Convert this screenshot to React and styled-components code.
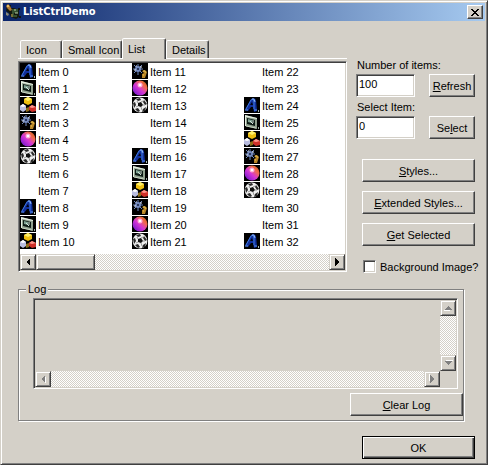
import React from "react";
import styled, { createGlobalStyle } from "styled-components";

const GlobalStyle = createGlobalStyle`
  * {
    box-sizing: border-box;
  }
  body {
    margin: 0;
    background: #d4d0c8;
    color: #000;
    font: 11px/14px "Liberation Sans", Arial, sans-serif;
  }
  button,
  input,
  textarea {
    font: inherit;
    color: inherit;
    border-radius: 0;
    margin: 0;
    outline: none;
  }
`;

const Dialog = styled.main`
  min-height: 100vh;
  padding: 1px;
  border: 1px solid;
  border-color: #d4d0c8 #404040 #404040 #d4d0c8;
  box-shadow: inset 1px 1px #fff, inset -1px -1px #808080;
`;

const TitleBar = styled.header`
  display: flex;
  align-items: center;
  gap: 2px;
  height: 18px;
  margin: 1px;
  padding: 0 2px;
  background: linear-gradient(to right, #0a246a, #a6caf0);
`;

const Title = styled.h1`
  flex: 1;
  margin: 0;
  color: #fff;
  font: bold 11px/14px "DejaVu Sans Condensed", "Noto Sans", sans-serif;
`;

const Raised = styled.button`
  display: flex;
  align-items: center;
  justify-content: center;
  padding: 0;
  background: #d4d0c8;
  border: 1px solid;
  border-color: #fff #404040 #404040 #fff;
  box-shadow: inset -1px -1px #808080;
`;

const CloseButton = styled(Raised)`
  width: 16px;
  height: 14px;
`;

const Button = styled(Raised)`
  width: ${(props) => (props.$small ? "46px" : "113px")};
  height: 23px;
  white-space: nowrap;
`;

const DefaultButton = styled(Button)`
  border-color: #000;
  box-shadow: inset 1px 1px #fff, inset -1px -1px #404040,
    inset -2px -2px #808080;
`;

const Body = styled.div`
  padding: 16px 11px 4px 16px;
`;

const Top = styled.div`
  display: grid;
  grid-template-columns: minmax(0, 1fr) 119px;
  gap: 9px;
`;

const TabList = styled.div`
  display: flex;
  align-items: flex-end;
  height: 20px;
  padding-left: 2px;
`;

const Tab = styled.button`
  height: ${(props) => (props.$active ? "21px" : "18px")};
  margin-bottom: ${(props) => (props.$active ? "-1px" : "0")};
  padding: 0 5px;
  white-space: nowrap;
  background: #d4d0c8;
  border: 1px solid;
  border-color: #fff #404040 transparent #fff;
  border-bottom-width: 0;
  border-radius: 2px 2px 0 0;
  box-shadow: inset -1px 0 #808080;
  width: ${(props) => props.$width};
  text-align: left;
`;

const Pane = styled.div`
  padding-top: 2px;
  border-top: 1px solid #fff;
`;

const Sunken = styled.div`
  padding: 1px;
  border: 1px solid;
  border-color: #808080 #fff #fff #808080;
  box-shadow: inset 1px 1px #404040, inset -1px -1px #d4d0c8;
`;

const ListBox = styled(Sunken)`
  background: #fff;
`;

const Items = styled.ul`
  display: grid;
  grid-auto-flow: column;
  grid-template-rows: repeat(11, 17px);
  grid-auto-columns: 112px;
  margin: 0 0 4px;
  padding: 0;
  list-style: none;
  overflow: hidden;
`;

const Item = styled.li`
  display: flex;
  align-items: center;
  gap: 2px;
`;

const IconSlot = styled.span`
  display: block;
  width: 16px;
  height: 17px;
`;

const ScrollBar = styled.div`
  display: flex;
  flex-direction: ${(props) => (props.$vertical ? "column" : "row")};
  justify-content: space-between;
  background: repeating-conic-gradient(#fff 0 25%, #d4d0c8 0 50%) 0 0 / 2px 2px;
`;

const ScrollButton = styled(Raised)`
  width: 16px;
  height: 16px;
  border-color: #d4d0c8 #404040 #404040 #d4d0c8;
  box-shadow: inset 1px 1px #fff, inset -1px -1px #808080;
`;

const Thumb = styled(ScrollButton)`
  width: 59px;
  margin-right: auto;
`;

const Side = styled.div`
  padding-top: 20px;
`;

const Field = styled.div`
  display: grid;
  grid-template-columns: 59px 46px;
  column-gap: 14px;
  row-gap: 2px;
  margin-bottom: 3px;
`;

const Label = styled.label`
  grid-column: 1 / -1;
  padding-left: 1px;
`;

const TextInput = styled.input`
  width: 100%;
  height: 23px;
  padding: 0 2px 3px;
  background: #fff;
  border: 1px solid;
  border-color: #808080 #fff #fff #808080;
  box-shadow: inset 1px 1px #404040, inset -1px -1px #d4d0c8;
`;

const Actions = styled.div`
  display: flex;
  flex-direction: column;
  gap: 9px;
  padding: 17px 0 0 6px;
`;

const CheckRow = styled.label`
  display: flex;
  align-items: center;
  gap: 4px;
  height: 23px;
  padding-left: 1px;
  white-space: nowrap;
`;

const CheckBox = styled.input`
  appearance: none;
  flex: none;
  width: 13px;
  height: 13px;
  background: #fff;
  border: 1px solid;
  border-color: #808080 #fff #fff #808080;
  box-shadow: inset 1px 1px #404040, inset -1px -1px #d4d0c8;
  &:checked {
    background: radial-gradient(#000 3px, #fff 4px);
  }
`;

const LogGroup = styled.fieldset`
  min-width: 0;
  margin: 4px 11px 15px 0;
  padding: 2px 0 4px 14px;
  border: 1px solid #808080;
  box-shadow: 1px 1px #fff, inset 1px 1px #fff;
`;

const Legend = styled.legend`
  margin-left: -7px;
  padding: 0 2px;
  background: #d4d0c8;
`;

const LogBox = styled(Sunken)`
  display: grid;
  grid-template-columns: 1fr 16px;
  grid-template-rows: 71px 16px;
  margin: 0 5px 4px 0;
`;

const LogText = styled.textarea`
  width: 100%;
  height: 100%;
  padding: 1px 2px;
  background: #d4d0c8;
  border: none;
  resize: none;
  overflow: hidden;
`;

const Right = styled.div`
  display: flex;
  justify-content: flex-end;
`;

const rotations = { left: 0, up: 90, right: 180, down: 270 };

const Arrow = ({ dir, disabled }) => (
  <svg width="10" height="10" viewBox="0 0 10 10" shapeRendering="crispEdges">
    <g transform={`rotate(${rotations[dir]} 5 5)`}>
      {disabled && <path d="M4 6l4 4V3z" fill="#fff" />}
      <path d="M3 5l4-4v8z" fill={disabled ? "#808080" : "#000"} />
    </g>
  </svg>
);

const Glyph = ({ children }) => (
  <svg width="16" height="16" viewBox="0 0 16 16" aria-hidden="true">
    <path d="M0 0h16v16H0z" fill="#000" />
    {children}
  </svg>
);

// small images of the list, in the order the items cycle through them
const glyphs = [
  <Glyph>
    <path d="M1 13l1-2 5-9 3-1 2 2 1 11-3 1-1-5H7l-3 4z" fill="#12309c" />
    <path d="M2 12L7 3l2-1 1 3v7" fill="none" stroke="#3f78dc" />
    <path d="M8 2l2 0 1 3" fill="none" stroke="#8fb6f5" />
    <path d="M8 5l1 3H6z" fill="#020510" />
    <path d="M1 13h3M10 13h3" stroke="#5a90e8" />
    <path d="M14 13h1v2h-1z" fill="#a8b8b0" />
  </Glyph>,
  <Glyph>
    <path d="M1 1l12 3v11L1 12z" fill="#8fa08e" />
    <path d="M1 1l12 3v1L2 3v9H1z" fill="#e4eee0" />
    <path d="M3 4l8 2v6l-8-2z" fill="#0c1a14" />
    <path d="M4 5l4 1v3L4 8z" fill="#7da191" />
    <path d="M6 7l3 3M9 6v3" stroke="#d5e6dc" />
    <path d="M2 12l10 2" fill="none" stroke="#c5d3c0" />
    <path d="M14 13h1v2h-1z" fill="#9aaaa0" />
  </Glyph>,
  <Glyph>
    <path d="M8 0l4 2v4L8 8 4 6V2z" fill="#eebf10" />
    <path d="M8 0l4 2-4 2-4-2z" fill="#fff06a" />
    <path d="M0 9l3-2 3 2v4l-3 2-3-2z" fill="#b9bde0" />
    <path d="M0 9l3-2 3 2-3 1z" fill="#fff" />
    <path d="M9 10l3-2 4 2v4l-4 1-3-2z" fill="#ce3029" />
    <path d="M9 10l3-2 4 2-4 1z" fill="#ff978c" />
    <path d="M6 11l3-1v4l-3 1z" fill="#8d6c19" />
  </Glyph>,
  <Glyph>
    <path
      d="M6 1v11M1 6h10M2 2l8 8M10 2l-8 8"
      stroke="#6f86bd"
      strokeWidth="1"
    />
    <circle cx="6" cy="6" r="3" fill="#7389bd" />
    <circle cx="6" cy="6" r="1" fill="#101b3b" />
    <path d="M4 3h1M8 4h2M2 7h2" stroke="#e6efff" />
    <path d="M10 8l3-1 2 2-1 3-1 3h-3l0-4 2-1z" fill="#b78425" />
    <path d="M11 8h2M11 12h1M13 9h1" stroke="#f0cc5c" />
  </Glyph>,
  <Glyph>
    <defs>
      <linearGradient id="ball" x1="0" y1="1" x2="1" y2="0">
        <stop offset="0" stopColor="#5a12c8" />
        <stop offset="0.45" stopColor="#d436d6" />
        <stop offset="0.7" stopColor="#f06a50" />
        <stop offset="1" stopColor="#c45b05" />
      </linearGradient>
    </defs>
    <circle cx="8" cy="8" r="7.5" fill="url(#ball)" />
    <circle cx="8" cy="5" r="2.5" fill="#ffa8d9" />
    <circle cx="8" cy="5" r="1.3" fill="#fff" />
  </Glyph>,
  <Glyph>
    <circle cx="8" cy="8" r="7.4" fill="#eee" />
    <path d="M6 6l3-1 2 3-2 2-3-1z" fill="#111" />
    <path d="M4 2l4-1 1 2-3 1zM12 3l3 4-2 1-2-3zM1 6l2-1 1 3-2 3zM3 12l3-1 2 3-2 1zM11 12l3-2-1 4-3 1z" fill="#292929" />
    <path d="M6 6L5 4M9 5l2-1M11 8h2M9 10l1 3M6 9l-2 1" stroke="#999" />
  </Glyph>
];

const AppIcon = () => (
  <svg width="16" height="16" viewBox="0 0 16 16" aria-hidden="true">
    <path d="M2 1h4v3h3l5 2v7l-3 2-5-2-2-4-3-2z" fill="#14180f" />
    <path d="M1 2l2-2 2 2 2 4-2 1-3-3z" fill="#b17a33" />
    <path d="M2 1h2v2H2z" fill="#e6bd65" />
    <path d="M1 8l3 2-1 2-2-1z" fill="#8d8c78" />
    <path d="M7 6h5v2H8v4h4" fill="none" stroke="#35502f" strokeWidth="2" />
    <path d="M9 6h2M10 9h3" stroke="#bad0a7" />
    <path d="M13 4h2v2h-2zM14 12h2v2h-2z" fill="#111" />
    <path d="M6 10h2v3H6z" fill="#756d37" />
  </svg>
);

const tabs = [
  { name: "Icon", width: "42px" },
  { name: "Small Icon", width: "60px" },
  { name: "List", width: "44px" },
  { name: "Details", width: "43px" }
];

const VISIBLE_ITEMS = 33;

const App = () => {
  const [tab, setTab] = React.useState("List");
  const [count, setCount] = React.useState("100");
  const [selected, setSelected] = React.useState("0");

  const items = Array.from(
    { length: Math.min(Number(count) || 0, VISIBLE_ITEMS) },
    (_, idx) => idx
  );

  return (
    <Dialog>
      <GlobalStyle />
      <TitleBar>
        <AppIcon />
        <Title>ListCtrlDemo</Title>
        <CloseButton aria-label="Close">
          <svg width="8" height="7" viewBox="0 0 8 7" shapeRendering="crispEdges">
            <path
              d="M0 0h2v1h1v1h2V1h1V0h2v1H7v1H6v1H5v1h1v1h1v1h1v1H6V6H5V5H3v1H2v1H0V6h1V5h1V4h1V3H2V2H1V1H0z"
              fill="#000"
            />
          </svg>
        </CloseButton>
      </TitleBar>
      <Body>
        <Top>
          <div>
            <TabList role="tablist">
              {tabs.map(({ name, width }) => (
                <Tab
                  key={name}
                  role="tab"
                  aria-selected={tab === name}
                  $active={tab === name}
                  $width={width}
                  onClick={() => setTab(name)}
                >
                  {name}
                </Tab>
              ))}
            </TabList>
            <Pane>
              <ListBox>
                <Items>
                  {items.map((idx) => (
                    <Item key={idx}>
                      <IconSlot>{glyphs[idx % 8]}</IconSlot>
                      Item {idx}
                    </Item>
                  ))}
                </Items>
                <ScrollBar>
                  <ScrollButton aria-label="Scroll left">
                    <Arrow dir="left" />
                  </ScrollButton>
                  <Thumb aria-label="Scroll thumb" />
                  <ScrollButton aria-label="Scroll right">
                    <Arrow dir="right" />
                  </ScrollButton>
                </ScrollBar>
              </ListBox>
            </Pane>
          </div>
          <Side>
            <Field>
              <Label htmlFor="count">Number of items:</Label>
              <TextInput
                id="count"
                value={count}
                onChange={(e) => setCount(e.target.value)}
              />
              <Button $small>
                <span>
                  <u>R</u>efresh
                </span>
              </Button>
            </Field>
            <Field>
              <Label htmlFor="selected">Select Item:</Label>
              <TextInput
                id="selected"
                value={selected}
                onChange={(e) => setSelected(e.target.value)}
              />
              <Button $small>
                <span>
                  Se<u>l</u>ect
                </span>
              </Button>
            </Field>
            <Actions>
              <Button>
                <span>
                  <u>S</u>tyles...
                </span>
              </Button>
              <Button>
                <span>
                  <u>E</u>xtended Styles...
                </span>
              </Button>
              <Button>
                <span>
                  <u>G</u>et Selected
                </span>
              </Button>
              <CheckRow>
                <CheckBox type="checkbox" />
                Background Image?
              </CheckRow>
            </Actions>
          </Side>
        </Top>
        <LogGroup>
          <Legend>Log</Legend>
          <LogBox>
            <LogText aria-label="Log" disabled />
            <ScrollBar $vertical>
              <ScrollButton aria-label="Scroll up" disabled>
                <Arrow dir="up" disabled />
              </ScrollButton>
              <ScrollButton aria-label="Scroll down" disabled>
                <Arrow dir="down" disabled />
              </ScrollButton>
            </ScrollBar>
            <ScrollBar>
              <ScrollButton aria-label="Scroll left" disabled>
                <Arrow dir="left" disabled />
              </ScrollButton>
              <ScrollButton aria-label="Scroll right" disabled>
                <Arrow dir="right" disabled />
              </ScrollButton>
            </ScrollBar>
          </LogBox>
          <Right>
            <Button>
              <span>
                <u>C</u>lear Log
              </span>
            </Button>
          </Right>
        </LogGroup>
        <Right>
          <DefaultButton>OK</DefaultButton>
        </Right>
      </Body>
    </Dialog>
  );
};

export default App;
